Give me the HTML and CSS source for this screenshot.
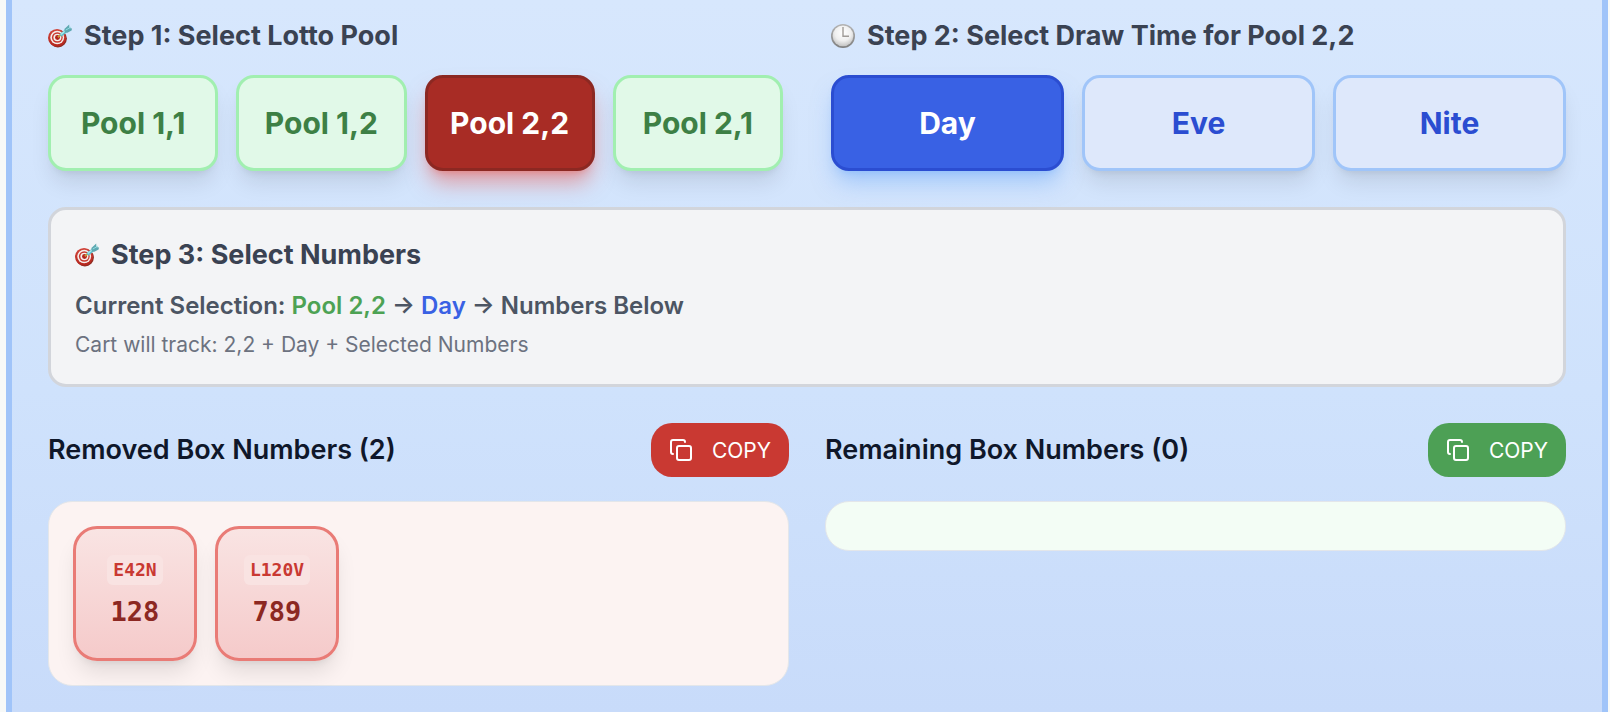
FILE: index.html
```html
<!DOCTYPE html>
<html lang="en">
<head>
    <meta charset="UTF-8">
    <meta name="viewport" content="width=device-width, initial-scale=1.0">
    <title>Lotto Number Picker</title>
    <link rel="stylesheet" href="styles.css">
</head>
<body>
    <svg class="sprite" aria-hidden="true">
        <defs>
            <radialGradient id="clock-face" cx="50%" cy="35%" r="65%">
                <stop offset="0" stop-color="#ffffff"/>
                <stop offset="0.6" stop-color="#efefef"/>
                <stop offset="1" stop-color="#c4c4c4"/>
            </radialGradient>
            <linearGradient id="clock-rim" x1="0" y1="0" x2="0" y2="1">
                <stop offset="0" stop-color="#b5b5b5"/>
                <stop offset="1" stop-color="#7f7f7f"/>
            </linearGradient>
            <linearGradient id="target-red" x1="0" y1="0" x2="0" y2="1">
                <stop offset="0" stop-color="#d2463c"/>
                <stop offset="1" stop-color="#b5251d"/>
            </linearGradient>
        </defs>
        <symbol id="icon-target" viewBox="0 0 24 24">
            <ellipse cx="9.9" cy="14.6" rx="9" ry="8.8" fill="#8e2a20"/>
            <ellipse cx="9" cy="13.8" rx="9" ry="8.8" fill="url(#target-red)"/>
            <ellipse cx="9.2" cy="13.5" rx="6.9" ry="6.7" fill="#f6eeec"/>
            <ellipse cx="9.3" cy="13.5" rx="5.4" ry="5.2" fill="#c8392f"/>
            <ellipse cx="9.4" cy="13.5" rx="4" ry="3.8" fill="#f6eeec"/>
            <ellipse cx="9.5" cy="13.5" rx="2.5" ry="2.4" fill="#b3231c"/>
            <path d="M9.8 13.2l3.6-2.8" stroke="#c99a3a" stroke-width="1.8"/>
            <path d="M12.4 11.4l7.2-5.8" stroke="#62bfca" stroke-width="3.2"/>
            <path d="M12.8 10.4l6.4-5.2" stroke="#a9ecef" stroke-width="1.3"/>
            <path d="M16.4 5l4.8-4.4.2 3.4 2.6.6-.4 2-4.2 2.2-2.6-.2z" fill="#5fa9b2"/>
            <path d="M17.8 6l5-2.8" stroke="#8fdde2" stroke-width="1"/>
        </symbol>
        <symbol id="icon-clock" viewBox="0 0 24 24">
            <circle cx="12" cy="12" r="12" fill="url(#clock-rim)"/>
            <circle cx="12" cy="11.8" r="10.4" fill="url(#clock-face)"/>
            <path d="M12 3v9.2h6" fill="none" stroke="#a09c98" stroke-width="1.4"/>
        </symbol>
        <symbol id="icon-copy" viewBox="0 0 24 24">
            <rect x="8" y="8" width="14" height="14" rx="2" ry="2"/>
            <path d="M4 16c-1.1 0-2-.9-2-2V4c0-1.1.9-2 2-2h10c1.1 0 2 .9 2 2"/>
        </symbol>
    </svg>

    <main class="picker">
        <div class="steps">
            <section>
                <h2 class="step-title">
                    <svg class="icon"><use href="#icon-target"/></svg>
                    Step 1: Select Lotto Pool
                </h2>
                <div class="options pools">
                    <button class="option pool">Pool 1,1</button>
                    <button class="option pool">Pool 1,2</button>
                    <button class="option pool active">Pool 2,2</button>
                    <button class="option pool">Pool 2,1</button>
                </div>
            </section>
            <section>
                <h2 class="step-title">
                    <svg class="icon"><use href="#icon-clock"/></svg>
                    Step 2: Select Draw Time for Pool 2,2
                </h2>
                <div class="options times">
                    <button class="option time active">Day</button>
                    <button class="option time">Eve</button>
                    <button class="option time">Nite</button>
                </div>
            </section>
        </div>

        <section class="selection">
            <h2 class="step-title">
                <svg class="icon"><use href="#icon-target"/></svg>
                Step 3: Select Numbers
            </h2>
            <p class="current">Current Selection: <span class="current-pool">Pool 2,2</span> → <span class="current-time">Day</span> → Numbers Below</p>
            <p class="track">Cart will track: 2,2 + Day + Selected Numbers</p>
        </section>

        <div class="results">
            <section>
                <div class="result-header">
                    <h3>Removed Box Numbers (2)</h3>
                    <button class="copy-btn copy-removed">
                        <svg class="icon icon-line"><use href="#icon-copy"/></svg>
                        COPY
                    </button>
                </div>
                <div class="panel panel-removed">
                    <div class="number-card">
                        <span class="code">E42N</span>
                        <span class="number">128</span>
                    </div>
                    <div class="number-card">
                        <span class="code">L120V</span>
                        <span class="number">789</span>
                    </div>
                </div>
            </section>
            <section>
                <div class="result-header">
                    <h3>Remaining Box Numbers (0)</h3>
                    <button class="copy-btn copy-remaining">
                        <svg class="icon icon-line"><use href="#icon-copy"/></svg>
                        COPY
                    </button>
                </div>
                <div class="panel panel-remaining"></div>
            </section>
        </div>
    </main>
</body>
</html>
```
FILE: styles.css
```css
* {
    box-sizing: border-box;
}

body {
    margin: 0;
    padding: 0 2px 0 6px;
    background-color: #f7f9f8;
    color: #0f172a;
    font-family: Inter, "Liberation Sans", sans-serif;
}

h2, h3, p {
    margin: 0;
}

button {
    font-family: inherit;
    cursor: pointer;
}

.sprite {
    position: absolute;
    width: 0;
    height: 0;
}

.picker {
    min-height: 100vh;
    padding: 15px 36px 18px;
    border-left: 6px solid #a0c4f9;
    border-right: 6px solid #a0c4f9;
    background: linear-gradient(180deg, #d7e7fd 0%, #cfe2fc 55%, #c8dbfa 100%);
}

.icon {
    width: 24px;
    height: 24px;
    flex-shrink: 0;
}

.icon-line {
    fill: none;
    stroke: currentColor;
    stroke-width: 2;
    stroke-linecap: round;
    stroke-linejoin: round;
}

/* Steps 1 and 2 */
.steps {
    display: grid;
    grid-template-columns: 1fr 1fr;
    gap: 48px;
    margin-bottom: 36px;
}

.step-title {
    display: flex;
    align-items: center;
    gap: 12px;
    font-size: 27px;
    font-weight: 700;
    line-height: 42px;
    color: #3a4252;
}

.options {
    display: grid;
    gap: 18px;
    margin-top: 18px;
}

.pools {
    grid-template-columns: repeat(4, 1fr);
}

.times {
    grid-template-columns: repeat(3, 1fr);
}

.option {
    height: 96px;
    padding: 0;
    border: 3px solid;
    border-radius: 18px;
    font-size: 30px;
    font-weight: 700;
    box-shadow: 0 15px 22px -4px rgba(0, 0, 0, 0.1), 0 6px 9px -6px rgba(0, 0, 0, 0.1);
}

.pool {
    background-color: #e1f9e8;
    border-color: #a1efb0;
    color: #3d8045;
}

.pool.active {
    background-color: #a82c25;
    border-color: #8c2822;
    color: #ffffff;
    box-shadow: 0 15px 22px -4px rgba(235, 80, 70, 0.5), 0 6px 9px -6px rgba(235, 80, 70, 0.5);
}

.time {
    background-color: #dee8fb;
    border-color: #a0c5f9;
    color: #2b4dd1;
}

.time.active {
    background-color: #3961e4;
    border-color: #2b4dd1;
    color: #ffffff;
    box-shadow: 0 15px 22px -4px rgba(110, 170, 250, 0.5), 0 6px 9px -6px rgba(110, 170, 250, 0.5);
}

/* Step 3 */
.selection {
    padding: 24px;
    margin-bottom: 36px;
    background-color: #f3f4f6;
    border: 3px solid #d2d5db;
    border-radius: 18px;
}

.current {
    margin-top: 12px;
    font-size: 24px;
    font-weight: 600;
    line-height: 36px;
    color: #4c5563;
}

.current-pool {
    color: #4da254;
}

.current-time {
    color: #3961e4;
}

.track {
    margin-top: 6px;
    font-size: 21px;
    line-height: 30px;
    color: #6c7280;
}

/* Results */
.results {
    display: grid;
    grid-template-columns: 1fr 1fr;
    gap: 36px;
}

.result-header {
    display: flex;
    align-items: center;
    justify-content: space-between;
    margin-bottom: 24px;
}

.result-header h3 {
    font-size: 27px;
    font-weight: 600;
    line-height: 42px;
}

.copy-btn {
    display: flex;
    align-items: center;
    gap: 19px;
    height: 54px;
    padding: 0 18px;
    border: none;
    border-radius: 21px;
    color: #ffffff;
    font-size: 21px;
}

.copy-removed {
    background-color: #c93932;
}

.copy-remaining {
    background-color: #4da055;
}

.panel {
    display: flex;
    flex-wrap: wrap;
    gap: 18px;
    padding: 24px;
    border: 1px solid #e3e6ea;
    border-radius: 24px;
}

.panel-removed {
    background-color: #fcf3f2;
}

.panel-remaining {
    background-color: #f3fdf5;
}

.number-card {
    display: flex;
    flex-direction: column;
    align-items: center;
    justify-content: center;
    gap: 6px;
    width: 124px;
    height: 135px;
    border: 3px solid #e97b76;
    border-radius: 24px;
    background: linear-gradient(180deg, #f9e4e3, #f5caca);
    box-shadow: 0 15px 22px -4px rgba(0, 0, 0, 0.1), 0 6px 9px -6px rgba(0, 0, 0, 0.1);
    font-family: "DejaVu Sans Mono", monospace;
    font-weight: 700;
}

.code {
    padding: 0 6px;
    border-radius: 6px;
    background-color: #f9e3e2;
    color: #c93932;
    font-size: 18px;
    line-height: 30px;
}

.number {
    color: #8c2822;
    font-size: 27px;
    line-height: 42px;
}
```
